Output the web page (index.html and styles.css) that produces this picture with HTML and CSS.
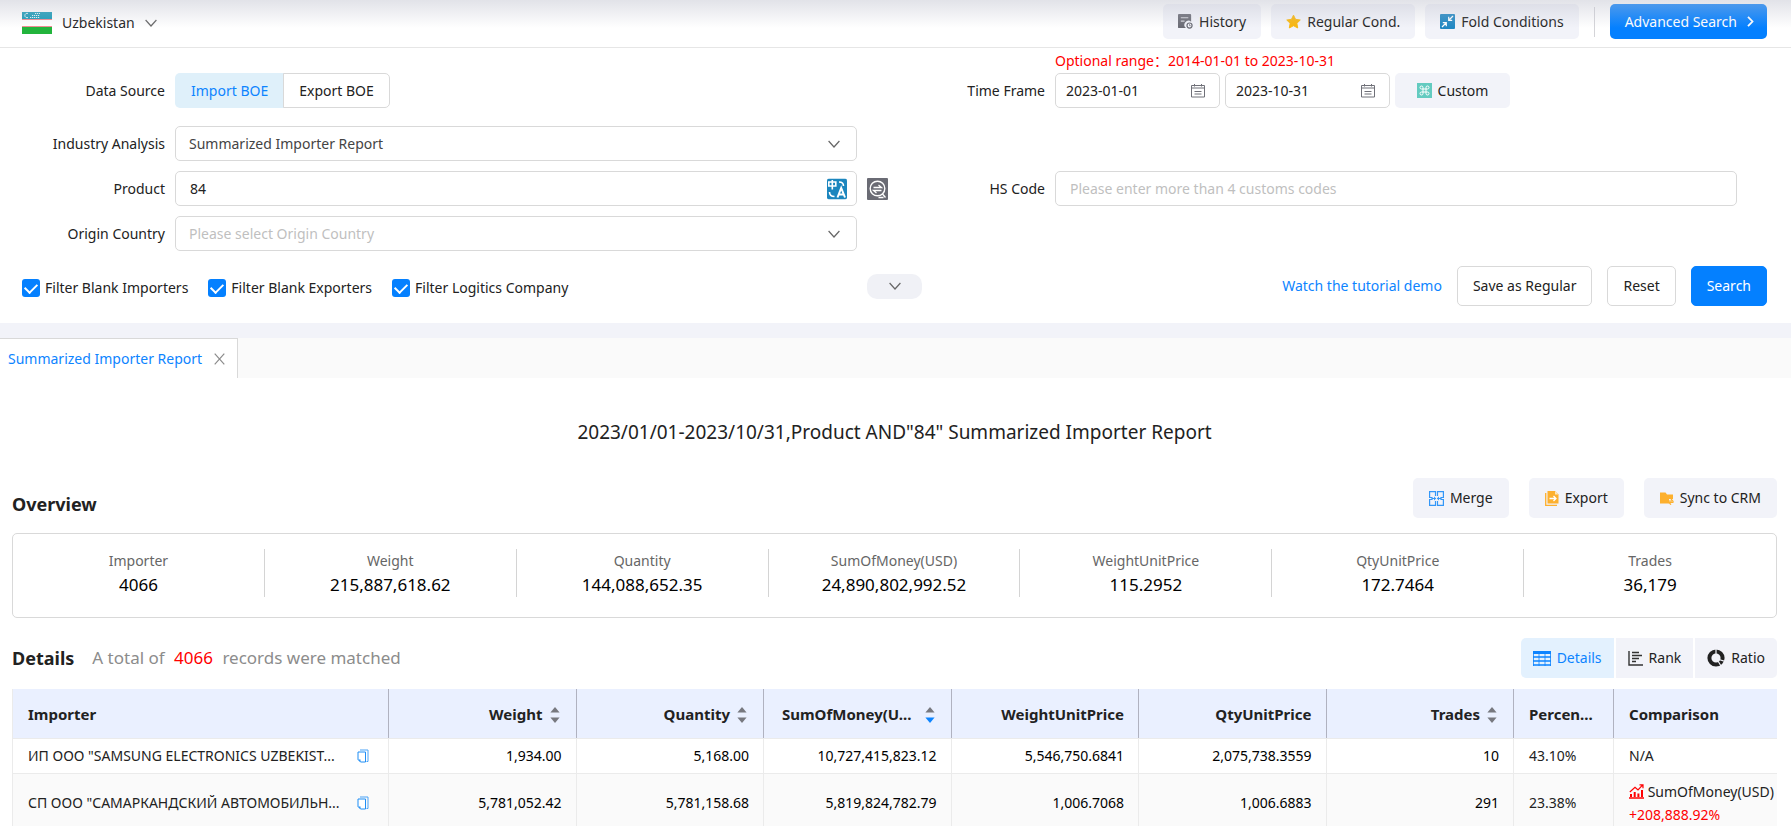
FILE: index.html
```html
<!DOCTYPE html>
<html lang="en">
	<head>
		<meta charset="utf-8">
		<title>Summarized Importer Report</title>
		<link rel="stylesheet" href="styles.css">
	</head>
	<body>
		<svg class="sprite" width="0" height="0">
			<symbol id="chevron" viewBox="0 0 12 8"><path d="M.6 1 6 7l5.400-6" fill="none" stroke="currentColor" stroke-width="1.200"/></symbol>
			<symbol id="calendar" viewBox="0 0 16 14"><path d="M1.500 1.500h13v11.500h-13zM1.500 4h13M4.500 0v2.500M11.500 0v2.500M4.500 7.500h7M4.500 10h7" fill="none" stroke="#6f7078"/></symbol>
			<symbol id="copy" viewBox="0 0 12 14"><path d="M3 1h8v11.500H9.500" fill="none" stroke="#4aa3f7"/><path d="M1 3h7.500v10H3.500L1 10.500z" fill="#fff" stroke="#1f8ef5"/><path d="M1 10.500h2.500V13z" fill="#1f8ef5"/></symbol>
			<symbol id="sort" viewBox="0 0 10 16"><path d="M5 0 9.600 5.500H.4z" style="fill:var(--up)"/><path d="M5 16 .4 10.500h9.200z" style="fill:var(--down)"/></symbol>
		</svg>

		<header class="topbar">
			<button class="country">
				<svg width="30" height="22" viewBox="0 0 30 22">
					<path fill="#fff" d="M0 0h30v22H0z"/>
					<path fill="#179bb8" d="M0 0h30v7H0z"/>
					<path fill="#f08a90" d="M0 7h30v1H0zM0 14h30v1H0z"/>
					<path fill="#22b43c" d="M0 15h30v7H0z"/>
					<path d="M6 1.500a2.200 2.200 0 1 0 0 4" fill="none" stroke="#d8eef3"/>
					<path d="M8 5.500h10M10 3.500h8M13 1.500h5" stroke="#e6f5f8" stroke-width="1.200" stroke-dasharray="1.200 .8"/>
				</svg>
				<span>Uzbekistan</span>
				<svg class="chev" width="12" height="8"><use href="#chevron"/></svg>
			</button>
			<div class="top-actions">
				<button class="soft">
					<svg width="15" height="15" viewBox="0 0 16 16"><path fill="#6a6b74" d="M1 0h12a1 1 0 0 1 1 1v7.200A4.200 4.200 0 0 0 8.500 15H1a1 1 0 0 1-1-1V1a1 1 0 0 1 1-1z"/><path d="M3 4h8M3 7.500h4" stroke="#d5d6dc" stroke-width="1.300"/><circle cx="12.300" cy="12.300" r="2.700" fill="#f2f3f9" stroke="#6a6b74" stroke-width="1.300"/><path d="M12.300 10.800v1.700h1.300" fill="none" stroke="#6a6b74" stroke-width=".8"/></svg>
					History
				</button>
				<button class="soft">
					<svg width="15" height="15" viewBox="0 0 16 15"><path fill="#fab70c" stroke="#fab70c" stroke-linejoin="round" d="m8 .7 2.200 4.500 5 .7-3.600 3.500.9 5L8 12l-4.500 2.400.9-5L.8 5.900l5-.7z"/></svg>
					Regular Cond.
				</button>
				<button class="soft">
					<svg width="15" height="15" viewBox="0 0 15 15"><path fill="#2188c3" d="M1 0h13a1 1 0 0 1 1 1v13a1 1 0 0 1-1 1H1a1 1 0 0 1-1-1V1a1 1 0 0 1 1-1z"/><path d="M13 2 9 6M8.700 2.800v3.500h3.500M2 13l4-4M2.800 8.700h3.500v3.500" fill="none" stroke="#fff" stroke-width="1.200"/></svg>
					Fold Conditions
				</button>
				<span class="divider"></span>
				<button class="primary">
					Advanced Search
					<svg width="7" height="11" viewBox="0 0 7 11"><path d="m1 .8 4.500 4.700L1 10.200" fill="none" stroke="#fff" stroke-width="1.800"/></svg>
				</button>
			</div>
		</header>

		<form class="conditions">
			<div class="fields">
				<span class="label">Data Source</span>
				<div class="switch">
					<button type="button" class="on">Import BOE</button>
					<button type="button">Export BOE</button>
				</div>
				<div class="label"><label for="from">Time Frame</label></div>
				<div class="timeframe">
					<p class="range">Optional range：2014-01-01 to 2023-10-31</p>
					<div class="dates">
						<span class="box date"><input type="text" id="from" value="2023-01-01"><svg width="16" height="14"><use href="#calendar"/></svg></span>
						<span class="box date"><input type="text" aria-label="End date" value="2023-10-31"><svg width="16" height="14"><use href="#calendar"/></svg></span>
						<button type="button" class="soft custom">
							<svg width="15" height="15" viewBox="0 0 15 15"><path fill="#63cbc0" d="M0 0h15v15H0z"/><path d="M6 6V4.500A1.500 1.500 0 1 0 4.500 6h6A1.500 1.500 0 1 0 9 4.500v6A1.500 1.500 0 1 0 10.500 9h-6A1.500 1.500 0 1 0 6 10.500z" fill="none" stroke="#fff"/></svg>
							Custom
						</button>
					</div>
				</div>
			</div>
			<div class="fields">
				<label class="label" for="analysis">Industry Analysis</label>
				<span class="box">
					<select id="analysis"><option>Summarized Importer Report</option></select>
					<svg class="chev" width="12" height="8"><use href="#chevron"/></svg>
				</span>
			</div>
			<div class="fields">
				<label class="label" for="product">Product</label>
				<span class="box">
					<input type="text" id="product" value="84">
					<svg class="translate" width="20" height="21" viewBox="0 0 20 21"><rect width="20" height="21" rx="2" fill="#1c86be"/><path d="M1.800 3.500h7v4h-7zM5.300 1.500v9.500M2.500 13.500c0 3 1.500 4.500 5 4.500M12 3.500c3 0 4.500 1.500 4.500 4" fill="none" stroke="#fff" stroke-width="1.600"/><path d="m10.500 19 3.700-9.500L18 19M12 16h4.500" fill="none" stroke="#fff" stroke-width="2"/></svg>
				</span>
				<div class="label with-icon">
					<button type="button" class="bare" aria-label="Fuzzy search">
						<svg width="21" height="22" viewBox="0 0 21 22"><rect width="21" height="22" rx="1" fill="#6a6b74"/><circle cx="10.500" cy="10.500" r="7.300" fill="none" stroke="#fff" stroke-width="1.400"/><path d="M15.500 16l3 3.500M6.500 9.500h8L11.500 7M14.500 12.500h-8L9.500 15M11.500 19.500h5" fill="none" stroke="#fff" stroke-width="1.300"/></svg>
					</button>
					<label for="hs">HS Code</label>
				</div>
				<span class="box"><input type="text" id="hs" placeholder="Please enter more than 4 customs codes"></span>
			</div>
			<div class="fields">
				<label class="label" for="origin">Origin Country</label>
				<span class="box">
					<select id="origin" class="empty"><option>Please select Origin Country</option></select>
					<svg class="chev" width="12" height="8"><use href="#chevron"/></svg>
				</span>
			</div>

			<div class="form-foot">
				<div class="checks">
					<label><input type="checkbox" checked>Filter Blank Importers</label>
					<label><input type="checkbox" checked>Filter Blank Exporters</label>
					<label><input type="checkbox" checked>Filter Logitics Company</label>
				</div>
				<button type="button" class="more" aria-label="More conditions"><svg class="chev" width="12" height="8"><use href="#chevron"/></svg></button>
				<div class="submit">
					<a href="#">Watch the tutorial demo</a>
					<button type="button">Save as Regular</button>
					<button type="reset">Reset</button>
					<button type="button" class="search">Search</button>
				</div>
			</div>
		</form>

		<nav class="tabs">
			<div class="tab">
				<a href="#">Summarized Importer Report</a>
				<button class="bare" aria-label="Close tab"><svg width="11" height="12" viewBox="0 0 11 12"><path d="m.7.7 9.600 10.600M10.300.7.7 11.300" stroke="#8c8c8c" stroke-width="1.200"/></svg></button>
			</div>
		</nav>

		<main class="report">
			<h1>2023/01/01-2023/10/31,Product AND"84" Summarized Importer Report</h1>

			<div class="bar overview">
				<h2>Overview</h2>
				<div class="tools">
					<button class="soft">
						<svg width="15" height="15" viewBox="0 0 15 15"><path d="M6.500 5V.6H.6v5.900H3v2H.6v5.900h5.900V10M8.500 5V.6h5.900v5.900H12v2h2.400v5.900H8.500V10M3 7.500h3.500M12 7.500H8.500" fill="none" stroke="#3397f8" stroke-width="1.200"/><path fill="#3397f8" d="M5 5.500v4l2.200-2zM10 5.500v4l-2.200-2z"/></svg>
						Merge
					</button>
					<button class="soft">
						<svg width="14" height="15" viewBox="0 0 14 15"><path fill="#fdb02e" d="M2.500 0H10l3.500 3.500v9h-11z"/><path d="M.7 2v12.300H12" fill="none" stroke="#fdb02e" stroke-width="1.300"/><path fill="#ffe6b8" d="M10 0v3.500h3.500z"/><path d="M4.500 7.500h6M8.500 5l2.500 2.500L8.500 10" fill="none" stroke="#fff" stroke-width="1.300"/></svg>
						Export
					</button>
					<button class="soft">
						<svg width="14" height="13" viewBox="0 0 14 13"><path fill="#fdb02e" d="M0 .5h5.500L7 2.500h6V7H9v4.500H0z"/><path d="M7.500 9.200H13L11 7M13.500 10.500H9l2 2.200" fill="none" stroke="#fdb02e" stroke-width="1.200"/></svg>
						Sync to CRM
					</button>
				</div>
			</div>

			<dl class="stats">
				<div><dt>Importer</dt><dd>4066</dd></div>
				<div><dt>Weight</dt><dd>215,887,618.62</dd></div>
				<div><dt>Quantity</dt><dd>144,088,652.35</dd></div>
				<div><dt>SumOfMoney(USD)</dt><dd>24,890,802,992.52</dd></div>
				<div><dt>WeightUnitPrice</dt><dd>115.2952</dd></div>
				<div><dt>QtyUnitPrice</dt><dd>172.7464</dd></div>
				<div><dt>Trades</dt><dd>36,179</dd></div>
			</dl>

			<div class="bar">
				<div class="found">
					<h2>Details</h2>
					<p>A total of <b>4066</b> records were matched</p>
				</div>
				<div class="views">
					<button class="soft on">
						<svg width="18" height="15" viewBox="0 0 18 15"><path fill="#0d84ff" d="M0 0h18v3H0z"/><path d="M0 6h18M0 10h18M0 14h18" stroke="#0d84ff" stroke-width="1.500"/><path d="M.5 0v15M6 3v12M12 3v12M17.500 0v15" stroke="#0d84ff" stroke-width=".8"/></svg>
						Details
					</button>
					<button class="soft">
						<svg width="15" height="15" viewBox="0 0 15 15"><path d="M1 0v14h14M4 1.500h7M4 4.500h10M4 7.500h7M4 10.500h4" fill="none" stroke="#333" stroke-width="1.400"/></svg>
						Rank
					</button>
					<button class="soft">
						<svg width="18" height="18" viewBox="0 0 18 18"><circle cx="9" cy="9" r="6.600" fill="none" stroke="#222" stroke-width="4"/><path d="M9 5V0M12 10.500l6 2M11 12l3 5" stroke="#f2f3f9" stroke-width="1.200"/></svg>
						Ratio
					</button>
				</div>
			</div>

			<table>
				<colgroup>
					<col class="c-name"><col class="c-num"><col class="c-num"><col class="c-num"><col class="c-num"><col class="c-num"><col class="c-num"><col class="c-pct"><col class="c-cmp">
				</colgroup>
				<thead>
					<tr>
						<th class="left">Importer</th>
						<th>Weight<svg class="sort" width="10" height="16"><use href="#sort"/></svg></th>
						<th>Quantity<svg class="sort" width="10" height="16"><use href="#sort"/></svg></th>
						<th>SumOfMoney(U...<svg class="sort desc" width="10" height="16"><use href="#sort"/></svg></th>
						<th>WeightUnitPrice</th>
						<th>QtyUnitPrice</th>
						<th>Trades<svg class="sort" width="10" height="16"><use href="#sort"/></svg></th>
						<th class="left">Percen...</th>
						<th class="left">Comparison</th>
					</tr>
				</thead>
				<tbody>
					<tr>
						<td class="left"><div class="name"><span>ИП ООО "SAMSUNG ELECTRONICS UZBEKIST...</span><button class="bare" aria-label="Copy"><svg width="12" height="14"><use href="#copy"/></svg></button></div></td>
						<td>1,934.00</td>
						<td>5,168.00</td>
						<td>10,727,415,823.12</td>
						<td>5,546,750.6841</td>
						<td>2,075,738.3559</td>
						<td>10</td>
						<td class="left">43.10%</td>
						<td class="left">N/A</td>
					</tr>
					<tr>
						<td class="left"><div class="name"><span>СП ООО "САМАРКАНДСКИЙ АВТОМОБИЛЬН...</span><button class="bare" aria-label="Copy"><svg width="12" height="14"><use href="#copy"/></svg></button></div></td>
						<td>5,781,052.42</td>
						<td>5,781,158.68</td>
						<td>5,819,824,782.79</td>
						<td>1,006.7068</td>
						<td>1,006.6883</td>
						<td>291</td>
						<td class="left">23.38%</td>
						<td class="left">
							<svg class="trend" width="15" height="15" viewBox="0 0 15 15"><path d="M0 14h15" stroke="#f00" stroke-width="1.500"/><path d="M2 13v-3M5.700 13V8M9.400 13V9.500M13 13V6" stroke="#f00" stroke-width="2"/><path d="M.8 8 6 3.200l3 2.800L13.500 1.200M10.500.8H14v3.500" fill="none" stroke="#f00" stroke-width="1.200"/></svg>
							SumOfMoney(USD)
							<div class="growth">+208,888.92%</div>
						</td>
					</tr>
				</tbody>
			</table>
		</main>
	</body>
</html>
```
FILE: styles.css
```css
* {
	box-sizing: border-box;
}
body {
	margin: 0;
	overflow: hidden;
	background: #fff;
	color: #222;
	font-family: "Noto Sans", "Noto Sans CJK SC", sans-serif;
	font-size: 14px;
	line-height: 20px;
}
h1, h2, p, dl, dd {
	margin: 0;
}
svg {
	flex: none;
}
a {
	color: #0d84ff;
	text-decoration: none;
}
button, input, select {
	font: inherit;
	color: inherit;
	white-space: nowrap;
}
button {
	display: flex;
	align-items: center;
	justify-content: center;
	border: none;
	background: none;
	padding: 0;
}
.sprite {
	position: absolute;
}
.chev {
	color: #666;
}

/* top bar */
.topbar {
	position: relative;
	display: flex;
	justify-content: space-between;
	align-items: flex-start;
	height: 48px;
	padding: 4px 24px 0 22px;
	border-bottom: 1px solid #e6e6e6;
}
.topbar:before {
	content: "";
	position: absolute;
	left: 0;
	right: 0;
	top: 0;
	height: 28px;
	background: linear-gradient(rgba(190, 192, 205, .45), rgba(255, 255, 255, 0));
	pointer-events: none;
}
.country {
	height: 37px;
	gap: 10px;
}
.top-actions {
	display: flex;
	align-items: center;
	gap: 10px;
}
.soft {
	gap: 6px;
	height: 35px;
	padding: 0 15px;
	border-radius: 5px;
	background: #f2f3f9;
}
.divider {
	width: 1px;
	height: 30px;
	margin: 0 5px;
	background: #d4d4d8;
}
.primary {
	gap: 10px;
	height: 35px;
	padding: 0 13px 0 15px;
	border-radius: 5px;
	background: #0480ff;
	color: #fff;
}

/* search conditions */
.conditions {
	padding-top: 1px;
	border-bottom: 15px solid #f2f3f9;
}
.fields {
	display: grid;
	grid-template-columns: 165px 1fr 178px 1fr;
	column-gap: 10px;
	align-items: end;
	margin-bottom: 10px;
	padding-right: 54px;
}
.fields:first-child {
	margin-bottom: 18px;
}
.label {
	line-height: 35px;
	text-align: right;
}
.with-icon {
	display: flex;
	justify-content: space-between;
}
.box {
	position: relative;
	display: block;
	height: 35px;
	border: 1px solid #d9d9d9;
	border-radius: 5px;
}
.box input, .box select {
	width: 100%;
	height: 100%;
	padding: 0 14px;
	border: none;
	border-radius: 5px;
	background: none;
	appearance: none;
}
.box select {
	color: #444;
	padding: 0 13px;
}
.box input::placeholder, .box .empty {
	color: #bfbfbf;
	opacity: 1;
}
.box svg {
	position: absolute;
	right: 16px;
	top: 50%;
	transform: translateY(-50%);
	pointer-events: none;
}
.box .translate {
	right: 9px;
}
.switch {
	display: flex;
}
.switch button {
	height: 35px;
	padding: 0 15px;
	border: 1px solid #d9d9d9;
	border-radius: 0 5px 5px 0;
}
.switch .on {
	border: none;
	border-radius: 5px 0 0 5px;
	background: #dff0fa;
	color: #0d84ff;
	padding: 0 16px;
	margin-right: -1px;
}
.range {
	color: #f00;
	line-height: 24px;
}
.dates {
	display: flex;
	gap: 5px;
}
.date {
	width: 165px;
}
.box.date input {
	padding: 0 10px;
}
.box.date svg {
	right: 13px;
}
.custom {
	width: 115px;
}
.form-foot {
	display: grid;
	grid-template-columns: 1fr auto 1fr;
	align-items: center;
	padding: 5px 24px 17px 22px;
}
.checks {
	display: flex;
	gap: 20px;
	padding-top: 4px;
}
.checks label {
	display: flex;
	align-items: center;
	gap: 5px;
}
.checks input {
	appearance: none;
	width: 18px;
	height: 18px;
	margin: 0;
	border-radius: 3px;
	background: #0480ff;
}
.checks input:checked:after {
	content: "";
	display: block;
	width: 6px;
	height: 10px;
	margin: 2px auto;
	border: solid #fff;
	border-width: 0 2px 2px 0;
	transform: rotate(45deg);
}
.more {
	width: 55px;
	height: 25px;
	border-radius: 10px;
	background: #f0f1f6;
}
.submit {
	display: flex;
	justify-content: flex-end;
	align-items: center;
	gap: 15px;
}
.submit button {
	height: 40px;
	padding: 0 15px;
	border: 1px solid #d9d9d9;
	border-radius: 5px;
}
.submit .search {
	border-color: #0480ff;
	background: #0480ff;
	color: #fff;
}

/* report tabs */
.tabs {
	display: flex;
	background: #fafafa;
}
.tab {
	display: flex;
	align-items: center;
	gap: 12px;
	height: 40px;
	padding: 0 12px 0 8px;
	border: solid #d9d9d9;
	border-width: 1px 1px 0 0;
	background: #fff;
}

/* report */
.report {
	padding: 0 14px 0 12px;
}
h1 {
	padding: 39px 0 31px;
	font-size: 19px;
	line-height: 30px;
	font-weight: normal;
	text-align: center;
}
h2 {
	font-size: 18px;
	line-height: 24px;
}
.bar {
	display: flex;
	justify-content: space-between;
	align-items: center;
}
.bar .soft {
	height: 40px;
	padding: 0 16px;
}
.overview h2 {
	padding-top: 11px;
}
.tools {
	display: flex;
	gap: 20px;
}
.stats {
	display: grid;
	grid-template-columns: repeat(7, 1fr);
	margin: 15px 0 20px;
	padding: 15px 0 20px;
	border: 1px solid #d9d9d9;
	border-radius: 5px;
	text-align: center;
}
.stats div {
	border-right: 1px solid #d4d4d4;
}
.stats div:last-child {
	border: none;
}
dt {
	color: #666;
	line-height: 24px;
}
dd {
	color: #000;
	font-size: 17px;
	line-height: 24px;
}
.found {
	display: flex;
	gap: 18px;
	color: #8c8c8c;
	font-size: 17px;
	line-height: 24px;
}
.found h2 {
	color: #222;
}
.found b {
	margin: 0 5px;
	color: #f00;
	font-weight: normal;
}
.views {
	display: flex;
	gap: 2px;
}
.bar .views .soft {
	padding: 0 12px;
	border-radius: 0;
}
.bar .views .on {
	border-radius: 5px 0 0 5px;
	background: #e3f1fe;
	color: #0d84ff;
}
.bar .views .soft:last-child {
	border-radius: 0 5px 5px 0;
}

table {
	width: 100%;
	margin-top: 11px;
	table-layout: fixed;
	border-collapse: separate;
	border-spacing: 0;
	border-left: 1px solid #ebebeb;
}
/* number columns share what is left */
.c-name {
	width: 376px;
}
.c-pct {
	width: 100px;
}
.c-cmp {
	width: 163px;
}
th {
	height: 49px;
	padding: 0 14px;
	border-right: 1px solid #b0b2c0;
	background: #eaf0ff;
	font-size: 15px;
	text-align: right;
	white-space: nowrap;
}
td {
	height: 35px;
	padding: 0 14px;
	border-right: 1px solid #ebebeb;
	border-top: 1px solid #ebebeb;
	color: #000;
	text-align: right;
	white-space: nowrap;
}
th.left, td.left {
	padding: 0 0 0 15px;
	color: #222;
	text-align: left;
}
th:last-child, td:last-child {
	border-right: none;
}
tbody tr:nth-child(2) td {
	height: 58px;
	background: #fafafa;
	line-height: 23px;
}
.sort {
	--up: #77787f;
	--down: #77787f;
	margin: 0 2px 0 7px;
	vertical-align: -3px;
}
.sort.desc {
	--down: #0d84ff;
	margin-left: 13px;
}
.name {
	display: flex;
	justify-content: space-between;
	align-items: center;
	padding-right: 19px;
}
.trend {
	vertical-align: -2px;
}
.growth {
	color: #f00;
}
```
